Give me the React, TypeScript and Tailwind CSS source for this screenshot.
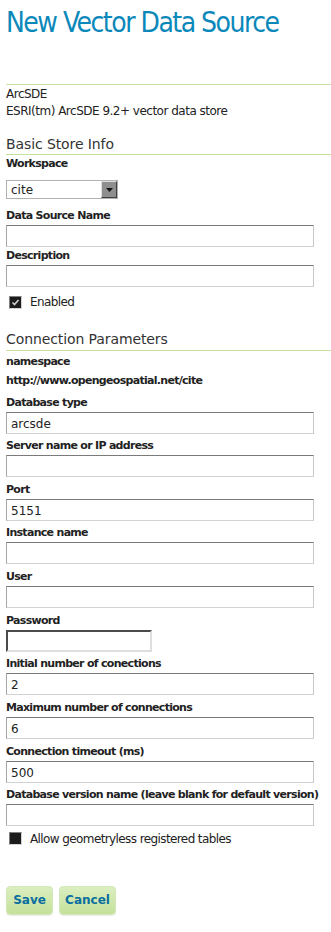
const F = "font-['DejaVu_Sans',Verdana,sans-serif]";

const Label = ({ children }: { children: React.ReactNode }) => (
  <div className="text-[11px] leading-[16px] font-bold text-[#222] tracking-[-0.7px] whitespace-nowrap">{children}</div>
);

const TextInput = ({ value = "", w = "w-[308px]", pwd = false }: { value?: string; w?: string; pwd?: boolean }) => (
  <div
    className={
      pwd
        ? `${w} h-[22px] mt-[1px] flex items-center pt-[1px] pl-[3px] text-[12px] text-[#222] bg-white border-2 border-t-[#4b4b4b] border-l-[#4b4b4b] border-r-[#dedede] border-b-[#dedede]`
        : `${w} h-[22px] mt-[1px] flex items-center pt-[2px] pl-[4px] text-[12px] text-[#222] bg-white border border-t-[#7a7a7a] border-l-[#a6a6a6] border-r-[#c9c9c9] border-b-[#d2d2d2]`
    }
  >
    {value}
  </div>
);

const Field = ({ label, value, w, pwd, tight }: { label: string; value?: string; w?: string; pwd?: boolean; tight?: boolean }) => (
  <div className={tight ? "mb-[1px]" : "mb-[4.63px]"}>
    <Label>{label}</Label>
    <TextInput value={value} w={w} pwd={pwd} />
  </div>
);

const Heading = ({ children, pb }: { children: React.ReactNode; pb: string }) => (
  <div className={`text-[14px] leading-[18px] text-[#333] border-b border-[#c6e2a0] tracking-[-0.1px] ${pb}`}>{children}</div>
);

const Check = ({ checked, label }: { checked: boolean; label: string }) => (
  <div className="flex items-center h-[16px] text-[12px] text-[#222] pl-[3px]">
    <div className="w-[13px] h-[13px] border border-t-[#808080] border-l-[#808080] border-r-[#d4d4d4] border-b-[#d4d4d4] bg-[#1c1c1c] flex items-center justify-center">
      {checked && (
        <svg width="9" height="9" viewBox="0 0 9 9">
          <path d="M1.5 4.5 L3.5 6.5 L7.5 2" stroke="#cfcfcf" strokeWidth="1.6" fill="none" />
        </svg>
      )}
    </div>
    <span className="ml-[8px] tracking-[-0.6px]">{label}</span>
  </div>
);

const Button = ({ children, w }: { children: React.ReactNode; w: string }) => (
  <div
    className={`${w} h-[29px] flex items-center justify-center rounded-[4px] border border-[#d3e8b6] bg-gradient-to-b from-[#dbeec0] to-[#c4e19a] text-[12px] font-bold text-[#0a6e9f] shadow-[0_1px_1px_rgba(0,0,0,0.08)]`}
  >
    {children}
  </div>
);

export default function App() {
  return (
    <div className={`${F} w-[331px] min-h-[932px] bg-white pl-[6px] text-[#222]`}>
      <div className="h-[85px] border-b border-[#c6e2a0] pt-[6px]">
        <h1 className="font-['DejaVu_Sans_Condensed','DejaVu_Sans',sans-serif] font-stretch-condensed text-[28px] leading-[34px] text-[#0b88ba] tracking-[-1.5px] whitespace-nowrap">
          New Vector Data Source
        </h1>
      </div>

      <div className="text-[12px] leading-[17px] pt-[1px] tracking-[-0.5px]">
        <div>ArcSDE</div>
        <div>ESRI(tm) ArcSDE 9.2+ vector data store</div>
      </div>

      <div className="mt-[15px]">
        <Heading pb="pb-[1px]">Basic Store Info</Heading>
        <div className="pt-[1px]">
          <Label>Workspace</Label>
          <div className="mt-[8px] mb-[9px] w-[112px] h-[19px] flex items-center justify-between border border-[#b0b0b0] bg-white">
            <span className="pl-[4px] text-[12px] text-[#222]">cite</span>
            <div className="w-[16px] h-[17px] bg-[#8e8e8e] border border-t-[#e0e0e0] border-l-[#e0e0e0] border-r-[#404040] border-b-[#404040] flex items-center justify-center">
              <svg width="7" height="4" viewBox="0 0 7 4">
                <path d="M0 0 H7 L3.5 4 Z" fill="#111" />
              </svg>
            </div>
          </div>
          <Field label="Data Source Name" tight />
          <Field label="Description" tight />
          <div className="mt-[7px]">
            <Check checked label="Enabled" />
          </div>
        </div>
      </div>

      <div className="mt-[20px]">
        <Heading pb="pb-[2px]">Connection Parameters</Heading>
        <div className="pt-[3px]">
          <Label>namespace</Label>
          <div className="mt-[3px] mb-[5.5px]">
            <Label>http://www.opengeospatial.net/cite</Label>
          </div>
          <Field label="Database type" value="arcsde" />
          <Field label="Server name or IP address" />
          <Field label="Port" value="5151" />
          <Field label="Instance name" />
          <Field label="User" />
          <Field label="Password" w="w-[146px]" pwd />
          <Field label="Initial number of conections" value="2" />
          <Field label="Maximum number of connections" value="6" />
          <Field label="Connection timeout (ms)" value="500" />
          <Field label="Database version name (leave blank for default version)" />
          <div className="mt-[3px]">
            <Check checked={false} label="Allow geometryless registered tables" />
          </div>
        </div>
      </div>

      <div className="flex gap-[6px] mt-[39px]">
        <Button w="w-[47px]">Save</Button>
        <Button w="w-[57px]">Cancel</Button>
      </div>
    </div>
  );
}
